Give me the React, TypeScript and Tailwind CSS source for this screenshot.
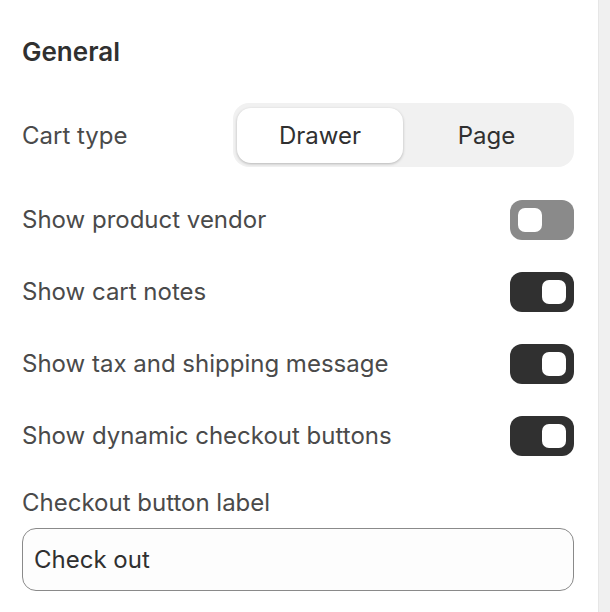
import React from 'react';

const Toggle = ({ on }: { on: boolean }) => (
  <div
    className={`flex h-[40px] w-[64px] items-center rounded-[12px] px-[8px] ${
      on ? 'justify-end bg-[#303030]' : 'justify-start bg-[#8a8a8a]'
    }`}
  >
    <div className="h-[24px] w-[24px] rounded-[7px] bg-white" />
  </div>
);

const ToggleRow = ({ label, on }: { label: string; on: boolean }) => (
  <div className="flex h-[40px] items-center justify-between">
    <span className="text-[24px] leading-[32px] text-[#4a4a4a]">{label}</span>
    <Toggle on={on} />
  </div>
);

export default function App() {
  return (
    <div className="flex h-[612px] w-[610px] bg-white" style={{ fontFamily: 'Inter, "Noto Sans", sans-serif' }}>
      <div className="flex w-[598px] flex-col pl-[22px] pr-[24px] pt-[36px]">
        <h2 className="text-[26px] font-semibold leading-[32px] text-[#303030]">General</h2>

        <div className="mt-[35px] flex h-[64px] items-center justify-between">
          <span className="pt-[2px] text-[24px] leading-[32px] text-[#4a4a4a]">Cart type</span>
          <div className="flex h-[64px] w-[341px] items-center gap-0 rounded-[16px] bg-[#f1f1f1] p-[4px]">
            <button className="h-[55px] w-[166px] rounded-[14px] bg-white pt-[2px] text-[24px] text-[#303030] shadow-[0_1px_3px_rgba(0,0,0,0.25)]">
              Drawer
            </button>
            <button className="h-[55px] flex-1 rounded-[14px] pt-[2px] text-[24px] text-[#303030]">Page</button>
          </div>
        </div>

        <div className="mt-[33px] flex flex-col gap-[32px]">
          <ToggleRow label="Show product vendor" on={false} />
          <ToggleRow label="Show cart notes" on />
          <ToggleRow label="Show tax and shipping message" on />
          <ToggleRow label="Show dynamic checkout buttons" on />
        </div>

        <label className="mt-[31px] text-[24px] leading-[32px] text-[#4a4a4a]">Checkout button label</label>
        <div className="mt-[9px] flex h-[63px] items-center rounded-[14px] border border-[#8a8a8a] bg-[#fdfdfd] px-[11px]">
          <span className="text-[24px] text-[#303030]">Check out</span>
        </div>
      </div>
      <div className="w-[12px] border-l border-[#e6e6e6] bg-[#f0f0f0]" />
    </div>
  );
}
